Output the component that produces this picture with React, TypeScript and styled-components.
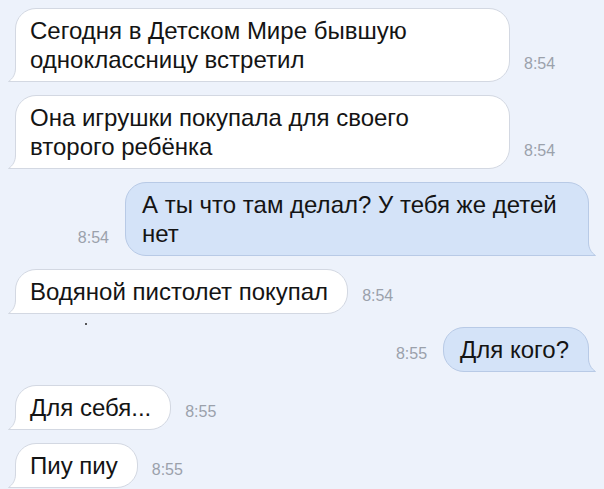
import React from "react";
import styled, { createGlobalStyle } from "styled-components";

const bg = "#edf2fb";
const inFill = "#ffffff";
const inBorder = "#d3d8e2";
const outFill = "#d4e3f8";
const outBorder = "#b8cae6";
const timeColor = "#9ba1ab";

const GlobalStyle = createGlobalStyle`
  html, body {
    margin: 0;
    padding: 0;
    background: ${bg};
  }
  body {
    font-family: "Liberation Sans", Arial, sans-serif;
    -webkit-font-smoothing: antialiased;
  }
`;

const Page = styled.div`
  width: 604px;
  height: 489px;
  box-sizing: border-box;
  padding: 8px 15px 0 15px;
  display: flex;
  flex-direction: column;
  gap: 13px;
  overflow: hidden;
  background: ${bg};
`;

const Row = styled.div<{ $out?: boolean }>`
  position: relative;
  display: flex;
  flex-direction: ${({ $out }) => ($out ? "row-reverse" : "row")};
  align-items: flex-end;
  gap: ${({ $out }) => ($out ? 16 : 14)}px;
`;

const Bubble = styled.div<{ $out?: boolean; $width?: number }>`
  position: relative;
  box-sizing: border-box;
  width: ${({ $width }) => ($width ? `${$width}px` : "auto")};
  padding: 7px 19px 7px ${({ $out }) => ($out ? 16 : 14)}px;
  font-size: 24px;
  line-height: 29px;
  color: #141414;
  white-space: nowrap;
  background: ${({ $out }) => ($out ? outFill : inFill)};
  border: 1px solid ${({ $out }) => ($out ? outBorder : inBorder)};
  border-radius: 21px;
  ${({ $out }) =>
    $out ? "border-bottom-right-radius: 0;" : "border-bottom-left-radius: 0;"}
`;

const TailSvg = styled.svg<{ $out?: boolean }>`
  position: absolute;
  bottom: -1px;
  ${({ $out }) => ($out ? "right: -8px; transform: scaleX(-1);" : "left: -8px;")}
  overflow: visible;
`;

const Time = styled.span`
  font-size: 16px;
  line-height: 16px;
  color: ${timeColor};
  margin-bottom: 10px;
  flex-shrink: 0;
`;

const Speck = styled.span`
  position: absolute;
  left: 70px;
  bottom: -11px;
  width: 2px;
  height: 2px;
  border-radius: 1px;
  background: #222;
`;

const Tail: React.FC<{ out?: boolean }> = ({ out }) => {
  const fill = out ? outFill : inFill;
  const stroke = out ? outBorder : inBorder;
  return (
    <TailSvg $out={out} width="14" height="14" viewBox="0 0 14 14">
      <path d="M7.5 0 C7.5 6, 5 10.5, 0.5 13.5 L14 13.5 L14 0 Z" fill={fill} />
      <path
        d="M7.5 0 C7.5 6, 5 10.5, 0.5 13.5 L14 13.5"
        fill="none"
        stroke={stroke}
        strokeWidth="1"
      />
    </TailSvg>
  );
};

interface Message {
  out?: boolean;
  lines: string[];
  time: string;
  width?: number;
}

const MESSAGES: Message[] = [
  {
    lines: ["Сегодня в Детском Мире бывшую", "одноклассницу встретил"],
    time: "8:54",
    width: 495,
  },
  {
    lines: ["Она игрушки покупала для своего", "второго ребёнка"],
    time: "8:54",
    width: 495,
  },
  {
    out: true,
    lines: ["А ты что там делал? У тебя же детей", "нет"],
    time: "8:54",
    width: 464,
  },
  { lines: ["Водяной пистолет покупал"], time: "8:54" },
  { out: true, lines: ["Для кого?"], time: "8:55" },
  { lines: ["Для себя..."], time: "8:55" },
  { lines: ["Пиу пиу"], time: "8:55" },
];

export default function App() {
  return (
    <>
      <GlobalStyle />
      <Page>
        {MESSAGES.map((m, i) => (
          <Row key={i} $out={m.out}>
            <Bubble $out={m.out} $width={m.width}>
              {m.lines.map((l, j) => (
                <React.Fragment key={j}>
                  {j > 0 && <br />}
                  {l}
                </React.Fragment>
              ))}
              <Tail out={m.out} />
            </Bubble>
            <Time>{m.time}</Time>
            {i === 3 && <Speck />}
          </Row>
        ))}
      </Page>
    </>
  );
}
